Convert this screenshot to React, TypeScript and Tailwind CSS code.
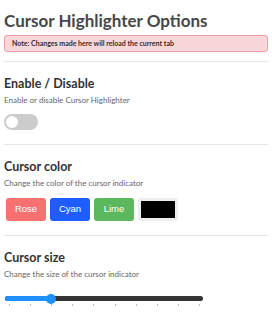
const ticks = [0, 1, 2, 3, 4, 5, 6, 7, 8, 9];

const colors: [string, string][] = [
  ['Rose', 'bg-[#f87171]'],
  ['Cyan', 'bg-[#1e5dff]'],
  ['Lime', 'bg-[#5cb85c]'],
];

function Section({ title, desc, children }: { title: string; desc: string; children: React.ReactNode }) {
  return (
    <section className="border-t border-[#e8e8e8] pt-[14px]">
      <h2 className="text-[12.5px] font-bold leading-[16px] text-[#333]">{title}</h2>
      <p className="mt-[2px] text-[8px] leading-[12px] text-[#666]">{desc}</p>
      {children}
    </section>
  );
}

export default function App() {
  return (
    <main className="h-[320px] w-[272px] overflow-hidden bg-white px-[4px] pt-[10px] font-['Lato',sans-serif]">
      <h1 className="text-[17px] font-bold leading-[22px] text-[#474747]">Cursor Highlighter Options</h1>
      <div className="mt-[3px] rounded-[3px] border border-[#f1a1a6] bg-[#f8d7da] px-[7px] py-[3px] text-[7px] font-bold leading-[9px] text-[#3a2a2b]">
        Note: Changes made here will reload the current tab
      </div>
      <div className="mt-[9px] flex flex-col gap-[14px]">
        <Section title="Enable / Disable" desc="Enable or disable Cursor Highlighter">
          <div className="mt-[8px] flex h-[16px] w-[34px] items-center rounded-full bg-[#ccc] px-[2px]">
            <div className="h-[12px] w-[12px] rounded-full bg-white" />
          </div>
        </Section>
        <Section title="Cursor color" desc="Change the color of the cursor indicator">
          <div className="mt-[9px] flex gap-[4px] pl-[2px]">
            {colors.map(([name, bg]) => (
              <button
                key={name}
                type="button"
                className={`h-[23px] w-[40px] rounded-[3px] ${bg} font-['Liberation_Sans',sans-serif] text-[9.5px] text-white`}
              >
                {name}
              </button>
            ))}
            <div className="h-[23px] w-[40px] rounded-[3px] border-[3px] border-[#eee] bg-black" />
          </div>
        </Section>
        <Section title="Cursor size" desc="Change the size of the cursor indicator">
          <div className="mt-[16px] w-[199px] pl-[1px]">
            <div className="relative h-[5px] rounded-full bg-[#333]">
              <div className="h-[5px] w-[46px] rounded-full bg-[#1e90ff]" />
              <div className="absolute left-[41px] top-[-2.5px] h-[10px] w-[10px] rounded-full bg-[#1e90ff]" />
            </div>
            <div className="mt-[3px] flex justify-between pl-[4px] pr-[3px]">
              {ticks.map((t) => (
                <span key={t} className="h-[2px] w-px bg-[#bbb]" />
              ))}
            </div>
          </div>
        </Section>
      </div>
    </main>
  );
}
